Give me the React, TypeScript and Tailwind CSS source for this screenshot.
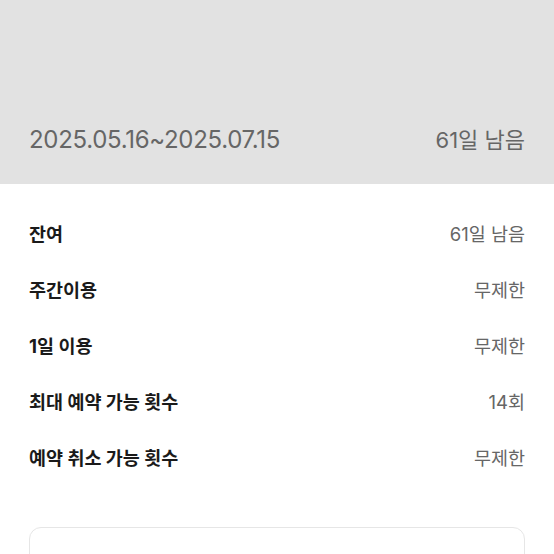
import React from "react";

const rows: [string, string][] = [
  ["잔여", "61일 남음"],
  ["주간이용", "무제한"],
  ["1일 이용", "무제한"],
  ["최대 예약 가능 횟수", "14회"],
  ["예약 취소 가능 횟수", "무제한"],
];

export default function App() {
  return (
    <div
      className="w-[554px] h-[554px] overflow-hidden bg-white"
      style={{ fontFamily: '"Inter", "Noto Sans CJK KR", sans-serif' }}
    >
      <div className="h-[184px] bg-[#e2e2e2] flex items-end justify-between px-[29px] pb-[28px]">
        <span className="text-[24px] leading-[32px] text-[#666666] tracking-[-0.3px]">
          2025.05.16~2025.07.15
        </span>
        <span className="text-[22px] leading-[32px] text-[#666666]">61일 남음</span>
      </div>
      <div className="px-[29px] pt-[23px]">
        {rows.map(([k, v]) => (
          <div key={k} className="h-[56px] flex items-center justify-between">
            <span className="text-[18.5px] font-bold text-[#1a1a1a]">{k}</span>
            <span className="text-[18.5px] text-[#666666]">{v}</span>
          </div>
        ))}
      </div>
      <div className="mx-[29px] mt-[40px] h-[80px] rounded-[12px] border border-[#e6e6e6] px-[34px] pt-[22px]">
        <span className="text-[16px] text-[#e8e8e8]">예약 가능한 센터</span>
      </div>
    </div>
  );
}
